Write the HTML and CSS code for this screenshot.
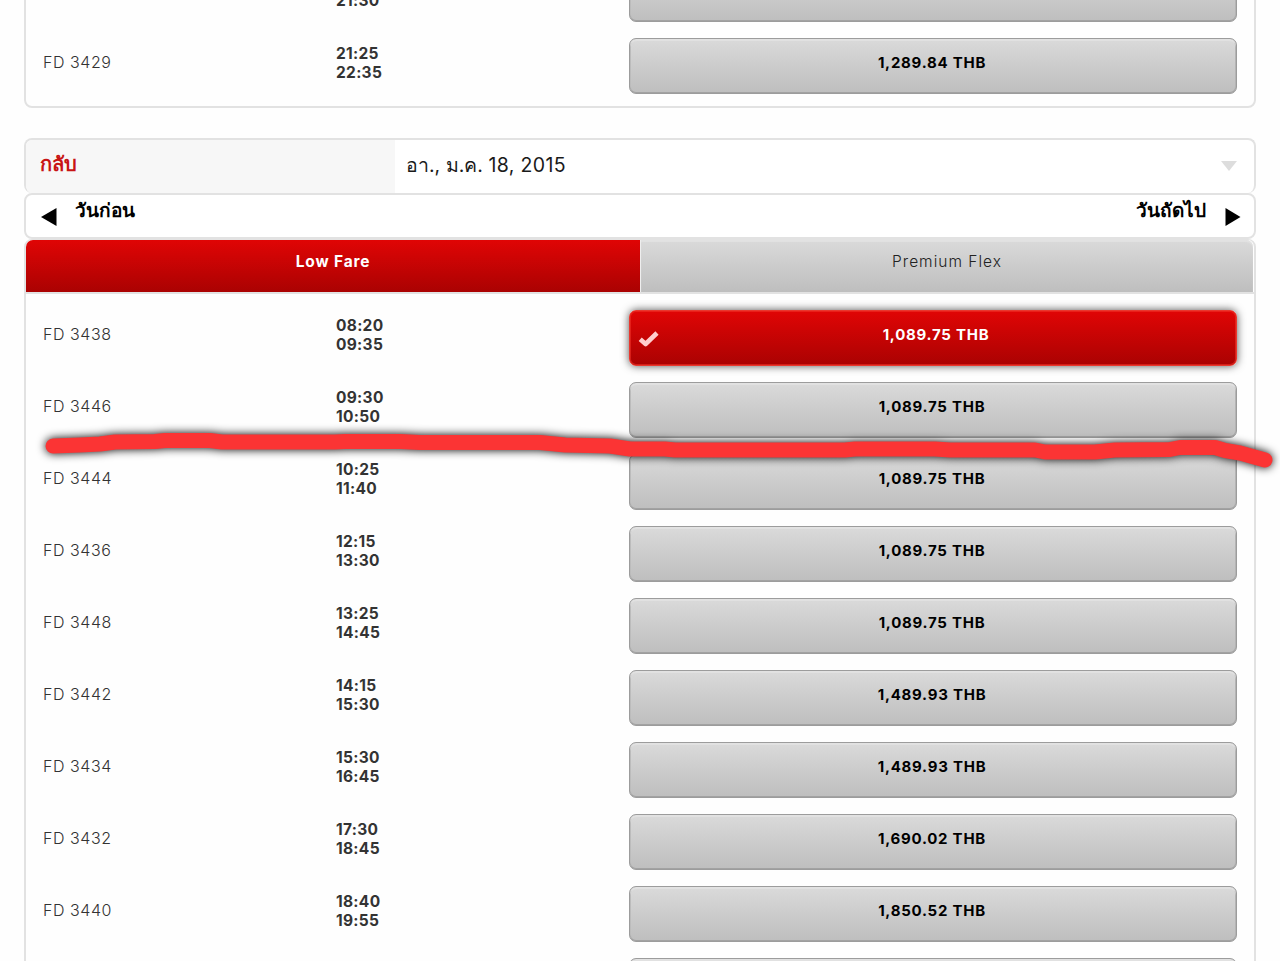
FILE: index.html
```html
<!DOCTYPE html>
<html lang="th">
<head>
<meta charset="utf-8">
<title>AirAsia</title>
<link rel="stylesheet" href="styles.css">
</head>
<body>
<main class="page">
  <section class="card outbound">
    <div class="row"><span class="flight"></span><span class="times"><br>21:30</span><button class="fare"></button></div>
    <div class="row"><span class="flight">FD 3429</span><span class="times">21:25<br>22:35</span><button class="fare"><span>1,289.84 THB</span></button></div>
  </section>

  <section class="date-bar">
    <div class="date-label"><span class="label-text">กลับ</span></div>
    <div class="date-value"><span class="date-text">อา., ม.ค. <span class="date-number">18, 2015</span></span><svg class="caret" width="16" height="10" viewBox="0 0 16 10"><path d="M0 0H16L8 10Z"/></svg></div>
  </section>
  <nav class="day-nav">
    <a class="day prev"><svg class="arrow" width="16" height="18" viewBox="0 0 16 18"><path d="M15.5 0V18L0 9Z"/></svg><span class="prev-text">วันก่อน</span></a>
    <a class="day next"><span class="next-text">วันถัดไป</span><svg class="arrow" width="16" height="18" viewBox="0 0 16 18"><path d="M.5 0V18L15.5 9Z"/></svg></a>
  </nav>
  <section class="card inbound">
    <div class="tabs"><div class="tab active"><span>Low Fare</span></div><div class="tab"><span>Premium Flex</span></div></div>
    <div class="rows">
    <div class="row"><span class="flight">FD 3438</span><span class="times">08:20<br>09:35</span><button class="fare selected"><svg class="check" width="24" height="20" viewBox="0 0 24 20"><path d="M3.2 10.2L8.6 15L20 4"/></svg><span>1,089.75 THB</span></button></div>
    <div class="row"><span class="flight">FD 3446</span><span class="times">09:30<br>10:50</span><button class="fare"><span>1,089.75 THB</span></button></div>
    <div class="row"><span class="flight">FD 3444</span><span class="times">10:25<br>11:40</span><button class="fare"><span>1,089.75 THB</span></button></div>
    <div class="row"><span class="flight">FD 3436</span><span class="times">12:15<br>13:30</span><button class="fare"><span>1,089.75 THB</span></button></div>
    <div class="row"><span class="flight">FD 3448</span><span class="times">13:25<br>14:45</span><button class="fare"><span>1,089.75 THB</span></button></div>
    <div class="row"><span class="flight">FD 3442</span><span class="times">14:15<br>15:30</span><button class="fare"><span>1,489.93 THB</span></button></div>
    <div class="row"><span class="flight">FD 3434</span><span class="times">15:30<br>16:45</span><button class="fare"><span>1,489.93 THB</span></button></div>
    <div class="row"><span class="flight">FD 3432</span><span class="times">17:30<br>18:45</span><button class="fare"><span>1,690.02 THB</span></button></div>
    <div class="row"><span class="flight">FD 3440</span><span class="times">18:40<br>19:55</span><button class="fare"><span>1,850.52 THB</span></button></div>
    <div class="row"><span class="flight"></span><span class="times"></span><button class="fare"></button></div>
    </div>
  </section>
</main>
<svg class="marker" width="1280" height="961" viewBox="0 0 1280 961"><path d="M53 446L80 445L100 444L115 442L155 441.5L165 440.5H210L222 442H335L345 441.5H400L420 442.5H540L565 445L610 446L630 449H665L675 450H845L855 449H935L950 450H1035L1045 452H1095L1115 450L1170 449.5L1180 447.5H1215L1225 450.5L1240 453L1265 460"/></svg>
</body>
</html>
```
FILE: styles.css
```css
* { box-sizing: border-box; }
html, body { margin: 0; height: 961px; overflow: hidden; }
body { background: #fefefe; font-family: "Inter", "Noto Sans", sans-serif; font-size: 16px; color: #333; }
.page { height: 961px; padding: 0 24px; overflow: hidden; }
.card { border: 2px solid #e2e2e2; background: #fefefe; }
.outbound { margin-top: -44px; height: 152px; border-radius: 8px; }
.row { display: grid; grid-template-columns: 293px 293px 608px; height: 72px; padding: 0 0 0 17px; align-items: start; }
.flight { padding-top: 20px; line-height: 24px; font-weight: 300; letter-spacing: .55px; }
.times { padding-top: 14px; font-size: 15.5px; line-height: 19.2px; font-weight: 700; letter-spacing: .3px; min-height: 52px; }
.fare { position: relative; height: 56px; width: 608px; margin: 8px 0; padding: 0 2px 8px 0; border: 1px solid #9c9c9c; border-radius: 7px; background: linear-gradient(#dadada, #bebebe); box-shadow: inset 0 2px 1px #e2e2e2, inset 0 -1px #a2a2a2, inset 1px 0 #b8b8b8, inset -1px 0 #b0b0b0; font-family: inherit; font-size: 15px; font-weight: 700; color: #000; text-align: center; letter-spacing: .75px; }
.fare.selected { border-color: #e9382f; background: linear-gradient(#e00505, #aa0202); box-shadow: inset 0 0 0 1px rgba(240, 50, 40, .6), 0 0 9px #555; color: #fff; padding-left: 8px; }
.check { position: absolute; left: 7px; top: 18px; fill: none; stroke: #ffcece; stroke-width: 4.6; stroke-linejoin: round; }
.date-bar { display: flex; height: 55px; margin-top: 30px; border: 2px solid #e2e2e2; border-bottom: 0; border-radius: 8px; overflow: hidden; background: #fff; }
.date-label { width: 369px; background: #f7f7f7; padding: 8px 0 0 14px; color: #c81414; font-size: 20px; font-weight: 700; line-height: 32px; }
.date-value { flex: 1; display: flex; justify-content: space-between; padding: 9px 17px 0 11px; color: #1a1a1a; font-size: 19.5px; line-height: 32px; }
.date-number { letter-spacing: .35px; }
.caret { margin-top: 12px; fill: #ddd; }
.day-nav { display: flex; justify-content: space-between; height: 46px; border: 2px solid #e2e2e2; border-radius: 8px; padding: 0 13px 0 15px; background: #fff; color: #000; font-size: 19px; font-weight: 700; line-height: 32px; }
.day { display: flex; gap: 18px; }
.next { gap: 19px; }
.arrow { margin-top: 13px; }
.inbound { border-radius: 8px 8px 0 0; height: 740px; border-top-width: 1px; }
.tabs { display: flex; height: 54px; border-bottom: 2px solid #e2e2e2; }
.tab { flex: 1; background: linear-gradient(#dadada, #bebebe); box-shadow: inset 0 2px 1px #e2e2e2; text-align: center; padding-top: 10px; line-height: 24px; color: #222; font-weight: 300; font-size: 15.5px; letter-spacing: 1px; border-left: 1px solid #eee; border-radius: 0 7px 0 0; margin-right: 1px; }
.tab.active { flex: 0 0 614px; background: linear-gradient(#e00505, #aa0202); box-shadow: none; color: #fff; font-weight: 700; letter-spacing: .85px; border-left: 0; border-radius: 7px 0 0 0; margin-right: 0; }
.rows { padding-top: 8px; }
.marker { position: absolute; left: 0; top: 0; pointer-events: none; filter: drop-shadow(0 0 5px #000); }
.marker path { fill: none; stroke: #fb3434; stroke-width: 15; stroke-linecap: round; stroke-linejoin: round; }
```
